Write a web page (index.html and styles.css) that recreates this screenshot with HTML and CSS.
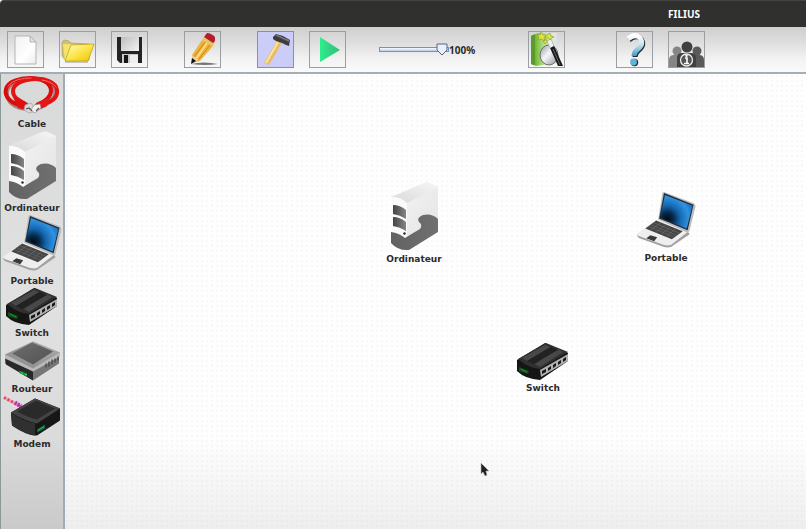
FILE: index.html
```html
<!DOCTYPE html>
<html lang="fr">
<head>
<meta charset="utf-8">
<title>FILIUS</title>
<link rel="stylesheet" href="styles.css">
</head>
<body>
<svg class="defs" aria-hidden="true">
  <defs>
    <linearGradient id="pcSide" x1="0" y1="0" x2="1" y2="1"><stop offset="0" stop-color="#f6f6f6"/><stop offset="1" stop-color="#e2e2e2"/></linearGradient>
    <linearGradient id="pcTop" x1="0" y1="1" x2="1" y2="0"><stop offset="0" stop-color="#d9d9d9"/><stop offset="1" stop-color="#f6f6f6"/></linearGradient>
    <linearGradient id="pcBase" x1="0" y1="0" x2="1" y2="0"><stop offset="0" stop-color="#626262"/><stop offset="1" stop-color="#707070"/></linearGradient>
    <linearGradient id="bay" x1="0" y1="0" x2="1" y2="0"><stop offset="0" stop-color="#444"/><stop offset="1" stop-color="#858585"/></linearGradient>
    <radialGradient id="screen" cx=".22" cy=".72" r=".95"><stop offset="0" stop-color="#020b14"/><stop offset=".2" stop-color="#06294a"/><stop offset=".42" stop-color="#1467b0"/><stop offset=".7" stop-color="#2f93e2"/><stop offset="1" stop-color="#0f5aa0"/></radialGradient>
    <linearGradient id="rtTop" x1="0" y1="1" x2="1" y2="0"><stop offset="0" stop-color="#8b8b8b"/><stop offset="1" stop-color="#a9a9a9"/></linearGradient>
    <linearGradient id="rtPanel" x1="0" y1="0" x2="1" y2="1"><stop offset="0" stop-color="#6d6d6d"/><stop offset="1" stop-color="#525252"/></linearGradient>
    <linearGradient id="folder" x1="0" y1="0" x2="1" y2="1"><stop offset="0" stop-color="#fffbc4"/><stop offset=".5" stop-color="#fbe64e"/><stop offset="1" stop-color="#f0bf00"/></linearGradient>
    <linearGradient id="sheet" x1="0" y1="0" x2="1" y2="1"><stop offset="0" stop-color="#f0f0f0"/><stop offset=".6" stop-color="#fff"/><stop offset="1" stop-color="#ececec"/></linearGradient>
    <linearGradient id="metal" x1="0" y1="0" x2="1" y2="1"><stop offset="0" stop-color="#bdbdbd"/><stop offset="1" stop-color="#f4f4f4"/></linearGradient>
    <linearGradient id="play" x1="0" y1="0" x2="1" y2="0"><stop offset="0" stop-color="#2df08a"/><stop offset=".5" stop-color="#35d183"/><stop offset="1" stop-color="#2bc477"/></linearGradient>
    <linearGradient id="book" x1="0" y1="0" x2="1" y2="0"><stop offset="0" stop-color="#4d8a1c"/><stop offset=".2" stop-color="#7bbd3c"/><stop offset=".5" stop-color="#b9e08d"/><stop offset=".85" stop-color="#dfe9dc"/><stop offset="1" stop-color="#e0e0e6"/></linearGradient>
    <linearGradient id="lens" x1="0" y1="0" x2="1" y2="1"><stop offset="0" stop-color="#8e969c"/><stop offset=".45" stop-color="#f4f6fa"/><stop offset="1" stop-color="#8d8f96"/></linearGradient>
    <linearGradient id="ask" x1="0" y1="0" x2="0" y2="1"><stop offset="0" stop-color="#fff"/><stop offset=".45" stop-color="#c5e2f0"/><stop offset="1" stop-color="#3d9cc8"/></linearGradient>
  </defs>

  <symbol id="cable" viewBox="2 74 60 42">
    <g fill="none" stroke-linecap="round">
      <path d="M29 107C13 107 5 99 6 90C7 81 19 77 31 77C44 77 55 83 54 92C53 99 43 104 35 107" stroke="#7c1010" stroke-width="4" transform="translate(1 1)" opacity=".45"/>
      <path d="M24 105C11 103 4 96 6 88C8 80 20 77 30 77C42 77 51 82 51 90C51 97 44 101 37 104" stroke="#d60d0d" stroke-width="4"/>
      <path d="M38 104C51 102 58 97 57 89C56 81 44 77 34 78C22 79 13 83 13 90C13 97 19 99 24 102" stroke="#e31414" stroke-width="4"/>
      <path d="M8 85C13 79 22 77 31 77M56 86C53 82 48 80 42 79" stroke="#ff6a6a" stroke-width="1"/>
    </g>
    <path d="M13 96L28 102L26 109L18 107Z" fill="#df1010"/><path d="M50 96L36 102L38 109L47 105Z" fill="#e71717"/>
    <path d="M25 104L31 102L37 110L29 112L24 109Z" fill="#d7d7d7" stroke="#999" stroke-width=".6"/>
    <path d="M34 104L40 103L41 107L35 112L31 109Z" fill="#f2f2f2" stroke="#888" stroke-width=".6"/>
    <path d="M26 108L29 107L32 110M36 110L39 107" fill="none" stroke="#555" stroke-width="1.2"/>
  </symbol>

  <symbol id="pc" viewBox="4 130 56 70">
    <path d="M9 145L42 131Q45 130 47 131L56 135V178L25 197Q15 197 9 189Z" fill="url(#pcSide)"/>
    <path d="M9 145L43 131Q46 130 48 131L56 135L25 151Q18 145 9 145Z" fill="url(#pcTop)"/>
    <path d="M9 145Q18 144 25 151V187Q17 183 9 181Z" fill="#fafafa"/>
    <path d="M9 180Q17 181 23 186Q31 181 38 177Q41 173 37 170Q34 166 41 163Q50 161 56 167V180L27 198Q16 199 9 191Z" fill="url(#pcBase)"/>
    <path d="M11 153Q18 153 24 158V167Q18 163 11 162ZM11 165Q18 165 24 170V179Q18 175 11 174Z" fill="url(#bay)"/>
    <circle cx="22.500" cy="181.500" r="1.200" fill="#222"/>
  </symbol>

  <symbol id="laptop" viewBox="2 213 60 60">
    <path d="M3 256L23 242L54 253L56 256L37 269Q34 270 30 269L5 260Q2 258 3 256Z" fill="#a0a0a0"/>
    <path d="M3 255L23 241L55 253L37 267Q34 268 30 267L5 258Q2 257 3 255Z" fill="#eee"/>
    <path d="M30 213Q28 213 28 216L24 241L53 254Q56 254 56 252L62 228Q62 225 59 224Z" fill="#b9bcc0"/>
    <path d="M30 214L60 226L54 252L25 240Z" fill="#242d36"/>
    <path d="M31 216L59 227L53 250L26 239Z" fill="url(#screen)"/>
    <path d="M22 242L49 253L38 261L11 250Z" fill="#454545"/>
    <path d="M19 244L46 255M16 246L43 257M14 248L41 259M27 244L16 252M32 246L22 254M37 248L27 256M42 250L33 258" stroke="#777" stroke-width=".5"/>
    <path d="M16 257L23 259L20 263L12 260Z" fill="#3a3a3a"/>
  </symbol>

  <symbol id="switch" viewBox="4 286 56 38">
    <path d="M6 303L34 286L57 296V304L29 323Q14 322 6 314Z" fill="#151515"/>
    <path d="M7 302L35 286L57 295L29 312Q17 311 7 302Z" fill="#303030"/>
    <path d="M11 301L34 288L39 290L16 304ZM24 307L47 292L52 295L29 310Z" fill="#484848"/>
    <path d="M16 304L40 290L47 293L22 307Z" fill="#222"/>
    <path d="M29 313L57 297V304L30 320Z" fill="#b0b0b0"/>
    <path d="M31 314L35 312V315L31 317ZM37 311L40 309V312L37 314ZM42 308L45 306V309L42 311ZM47 305L50 303V306L47 308ZM52 302L55 300V303L52 305Z" fill="#161616"/>
    <path d="M8 310L18 314L17 317L8 314Z" fill="#0f5418"/><path d="M10 312L16 315" stroke="#1f9030" stroke-width="1"/>
  </symbol>

  <symbol id="router" viewBox="4 340 57 41">
    <path d="M5 355V363L33 380L59 363V355Z" fill="#777"/>
    <path d="M5 355L33 369V380L6 364Z" fill="#292929"/>
    <path d="M33 341L60 352V356L33 371L5 358V354Z" fill="#bababa"/>
    <path d="M33 341L60 352L33 368L5 354Z" fill="url(#rtTop)"/>
    <path d="M32 342L53 351L33 364L12 353Z" fill="url(#rtPanel)"/>
    <path d="M46 363V367M49 361V366M52 359V364M55 358V362M58 356V360" stroke="#464646" stroke-width="1.300"/>
    <path d="M19 370L27 373V376L20 373Z" fill="#17913a"/><path d="M21 372L23 373M25 374H27" stroke="#3fd45c"/>
  </symbol>

  <symbol id="modem" viewBox="4 395 58 40">
    <path d="M5 396L22 405" stroke="#e9a3c1" stroke-width="3"/>
    <path d="M5 396L22 405" stroke="#e84a5a" stroke-width="3" stroke-dasharray="2 2"/><path d="M16 401L22 405" stroke="#b335bd" stroke-width="4" stroke-dasharray="2 1"/>
    <path d="M12 411L36 397L61 407V419L38 434Q30 435 13 424Z" fill="#171717"/>
    <path d="M12 411L36 397L61 407L38 422Q27 420 12 411Z" fill="#444"/>
    <path d="M18 410L37 399L56 407L38 418Q29 416 18 410Z" fill="#2a2a2a"/>
    <path d="M12 411Q26 421 36 422V434Q26 433 13 424Z" fill="#303030"/>
    <path d="M38 428L46 423V427L38 431Z" fill="#10683a"/><path d="M39 429L45 425" stroke="#3bb467"/>
  </symbol>
</svg>

<div class="app">
  <header class="titlebar"><h1>FILIUS</h1></header>

  <div class="toolbar" role="toolbar" aria-label="Outils">
    <div class="group">
      <button type="button" aria-label="Nouveau"><svg viewBox="0 0 35 35"><path d="M7 4H22L28 10V32H7Z" fill="url(#sheet)" stroke="#b5b5b5"/><path d="M22 4V10H28Z" fill="#e2e2e2" stroke="#a8a8a8" stroke-width=".8"/></svg></button>
      <button type="button" aria-label="Ouvrir"><svg viewBox="0 0 35 35"><path d="M2 10L4 8L9 9L11 11L29 12V28L6 29L2 24Z" fill="#c9c27c" stroke="#a79b44" stroke-width=".6"/><path d="M3 12L25 13L28 16L9 29H5Z" fill="#f6e56a"/><path d="M11 13L34 12L28 29L5 29Z" fill="url(#folder)" stroke="#bd9b11" stroke-width=".7"/><path d="M5 30H28" stroke="#9a9a9a"/></svg></button>
      <button type="button" aria-label="Enregistrer"><svg viewBox="0 0 35 35"><path d="M5 5H30V31H8L5 28Z" fill="#242424"/><path d="M9 5H27V19H9Z" fill="url(#metal)"/><path d="M10 22H26V31H10Z" fill="#c9c9c9"/><path d="M12 23H16V31H12Z" fill="#151515"/><path d="M18 23H26V31H18Z" fill="#eee"/></svg></button>
    </div>
    <div class="group">
      <button type="button" aria-label="Annoter"><svg viewBox="0 0 35 35"><path d="M6 32Q18 29 33 32Q20 34 6 32Z" fill="#777"/><path d="M17 8L28 14L15 29L7 31L7 23Z" fill="#edb23f"/><path d="M20 10L9 25M25 13L13 28" stroke="#ca8522" stroke-width="1"/><path d="M22 11L11 27" stroke="#ffdb78" stroke-width="2"/><path d="M17 8L19 5L30 10L28 14Z" fill="#e6c65f"/><path d="M19 5L22 1Q26 1 30 5V9L28 11Z" fill="#b51d31"/><path d="M7 23L14 28L7 31Z" fill="#edcf9b"/><path d="M7 26L11 29L6 32Z" fill="#111"/></svg></button>
    </div>
    <div class="group">
      <button type="button" class="active" aria-pressed="true" aria-label="Mode conception"><svg viewBox="0 0 35 35"><path d="M19 9L24 11L11 33L6 31Z" fill="#e9bd63"/><path d="M20 10L8 31" stroke="#fbe29e" stroke-width="2"/><path d="M15 5L18 2L25 4L32 8L31 14L28 13L24 11L18 9L15 7Z" fill="#3c3c3c"/><path d="M18 3L31 9" stroke="#777" stroke-width="1.500"/></svg></button>
      <button type="button" aria-label="Mode simulation"><svg viewBox="0 0 35 35"><path d="M10 5L30 18L10 30Z" fill="url(#play)"/></svg></button>
    </div>
    <label class="zoom"><input type="range" min="0" max="100" value="100" aria-label="Vitesse de simulation"><span>100%</span></label>
    <div class="group wizard">
      <button type="button" aria-label="Assistant"><svg viewBox="0 0 35 35"><path d="M2 4L9 1H28V31L7 34L2 32Z" fill="url(#book)"/><path d="M2 4L6 2V33L2 32Z" fill="#5c9a2b"/><ellipse cx="20" cy="23" rx="9" ry="10" fill="url(#lens)" stroke="#676d6d"/><path d="M18 9L22 7L34 34H29Z" fill="#191919"/><path d="M18 9L22 7L25 14L21 16Z" fill="#eee"/><path d="M24 17L31 33" stroke="#666" stroke-width="1"/><path d="M12 0L14 3L17 3L15 6L16 9L12 7L9 8L10 5L8 3L11 3ZM21 1L22 4L25 5L22 6L21 8L19 6L16 6L18 3ZM17 7L18 10L16 12L14 9Z" fill="#e1e33c" stroke="#86981a" stroke-width=".6"/></svg></button>
    </div>
    <div class="group help">
      <button type="button" aria-label="Aide"><svg viewBox="0 0 35 35"><g fill="none" stroke-width="5"><path d="M11 7Q18 1 23 6Q27 12 21 17Q17 20 17 24" stroke="#252b30" transform="translate(1 1)"/><path d="M11 7Q18 1 23 6Q27 12 21 17Q17 20 17 24" stroke="url(#ask)"/></g><circle cx="17.500" cy="30.500" r="3.700" fill="#252b30"/><circle cx="16.500" cy="30" r="3.400" fill="#61b3d7"/></svg></button>
      <button type="button" aria-label="À propos"><svg viewBox="0 0 35 35"><g fill="#858585"><circle cx="8" cy="19" r="4.500"/><path d="M0 35V28Q0 23 5 23H11L15 35Z"/></g><g fill="#5a5a5a"><circle cx="28" cy="19" r="4.500"/><path d="M21 35L25 23H30Q35 23 35 28V35Z"/></g><circle cx="18" cy="15" r="5.500" fill="#404040"/><path d="M8 35V26Q8 21 13 21H22Q27 21 27 26V35Z" fill="#404040"/><circle cx="17.500" cy="28" r="6" fill="#555" stroke="#eee" stroke-width="1.300"/><path d="M16 26H18V31M15 31.500H20" fill="none" stroke="#fff" stroke-width="1.600"/><circle cx="17.500" cy="23.700" r="1.200" fill="#fff"/></svg></button>
    </div>
  </div>

  <div class="workspace">
    <aside class="palette" aria-label="Composants">
      <div class="device"><svg class="i-cable"><use href="#cable"/></svg><span>Cable</span></div>
      <div class="device"><svg class="i-pc"><use href="#pc"/></svg><span>Ordinateur</span></div>
      <div class="device"><svg class="i-laptop"><use href="#laptop"/></svg><span>Portable</span></div>
      <div class="device"><svg class="i-switch"><use href="#switch"/></svg><span>Switch</span></div>
      <div class="device"><svg class="i-router"><use href="#router"/></svg><span>Routeur</span></div>
      <div class="device"><svg class="i-modem"><use href="#modem"/></svg><span>Modem</span></div>
    </aside>
    <main class="canvas">
      <div class="device node node-pc"><svg class="i-pc"><use href="#pc"/></svg><span>Ordinateur</span></div>
      <div class="device node node-laptop"><svg class="i-laptop"><use href="#laptop"/></svg><span>Portable</span></div>
      <div class="device node node-switch"><svg class="i-switch"><use href="#switch"/></svg><span>Switch</span></div>
      <svg class="pointer" viewBox="0 0 10 15" aria-hidden="true"><path d="M1 1V12L3 10L5 14L7 13L6 9H9Z" fill="#222" stroke="#bbb" stroke-width=".6"/></svg>
    </main>
  </div>
</div>
</body>
</html>
```
FILE: styles.css
```css
* { box-sizing: border-box; }

body {
  margin: 0;
  background: #fff;
  color: #2b2b2b;
  font-family: "DejaVu Sans", sans-serif;
}

.defs { position: absolute; width: 0; height: 0; }

.app { display: flex; flex-direction: column; min-height: 100vh; }

.titlebar {
  display: flex;
  align-items: center;
  justify-content: flex-end;
  height: 27px;
  padding-right: 106px;
  border-top: 1px solid #444;
  border-top-left-radius: 4px;
  background: #30302e;
}

.titlebar h1 {
  margin: 0;
  color: #fff;
  font: bold 10px/16px "Noto Sans", sans-serif;
}

.toolbar {
  display: flex;
  align-items: center;
  gap: 36px;
  height: 47px;
  padding: 0 7px;
  border-bottom: 2px solid #a3afb5;
  background: linear-gradient(#cfcfcf, #dedede 35%, #f2f2f2 70%, #fafafa);
}

.group { display: flex; gap: 15px; }

.toolbar button {
  flex: none;
  width: 37px;
  height: 37px;
  padding: 0;
  border: 1px solid #9a9fa3;
  background: transparent;
}

.toolbar button.active { border-color: #8d8da8; background: #ccccf8; }

.toolbar button svg { display: block; width: 35px; height: 35px; }

.zoom {
  display: flex;
  align-items: center;
  margin-left: -3px;
  font: bold 10px/14px "Noto Sans", sans-serif;
}

.zoom input {
  width: 70px;
  height: 14px;
  margin: 0;
  appearance: none;
  background: transparent;
}

.zoom input::-webkit-slider-runnable-track {
  height: 5px;
  border: 1px solid #6f94c4;
  background: linear-gradient(#fff, #b5cdec);
}

.zoom input::-webkit-slider-thumb {
  width: 12px;
  height: 13px;
  margin-top: -5px;
  appearance: none;
  background: url("data:image/svg+xml,%3Csvg xmlns='http://www.w3.org/2000/svg' viewBox='0 0 12 13'%3E%3Cpath d='M1 1H11V7L6 12L1 7Z' fill='%23e8f0fb' stroke='%23546680'/%3E%3C/svg%3E");
}

.wizard { margin-left: 17px; }
.help { margin-left: 15px; }

.workspace { display: flex; flex: 1; }

.palette {
  flex: none;
  width: 65px;
  padding-top: 1px;
  border-left: 1px solid #8b9799;
  border-right: 2px solid #9fadb3;
  background: linear-gradient(#d8d9d9, #e0e1e0 50%, #dadbda 80%, #c9cac9);
}

.device {
  display: flex;
  flex-direction: column;
  align-items: center;
  font-size: 9px;
  font-weight: bold;
  line-height: 14px;
}

.device svg { display: block; }

.i-cable { width: 60px; height: 42px; }
.i-pc { width: 56px; height: 70px; }
.i-laptop { width: 60px; height: 59px; }
.i-switch { width: 56px; height: 38px; }
.i-router { width: 57px; height: 42px; }
.i-modem { width: 58px; height: 41px; }

.canvas {
  position: relative;
  flex: 1;
  background:
    radial-gradient(circle at 2px 2px, rgba(120, 120, 120, .16) 0, transparent 1px) 0 0 / 5px 5px,
    linear-gradient(#fefefe 80%, #eee);
}

.node { position: absolute; width: 70px; }
.node-pc { left: 314px; top: 108px; }
.node-laptop { left: 566px; top: 118px; }
.node-switch { left: 443px; top: 269px; }
.pointer { position: absolute; left: 415px; top: 388px; width: 10px; height: 15px; }
```
